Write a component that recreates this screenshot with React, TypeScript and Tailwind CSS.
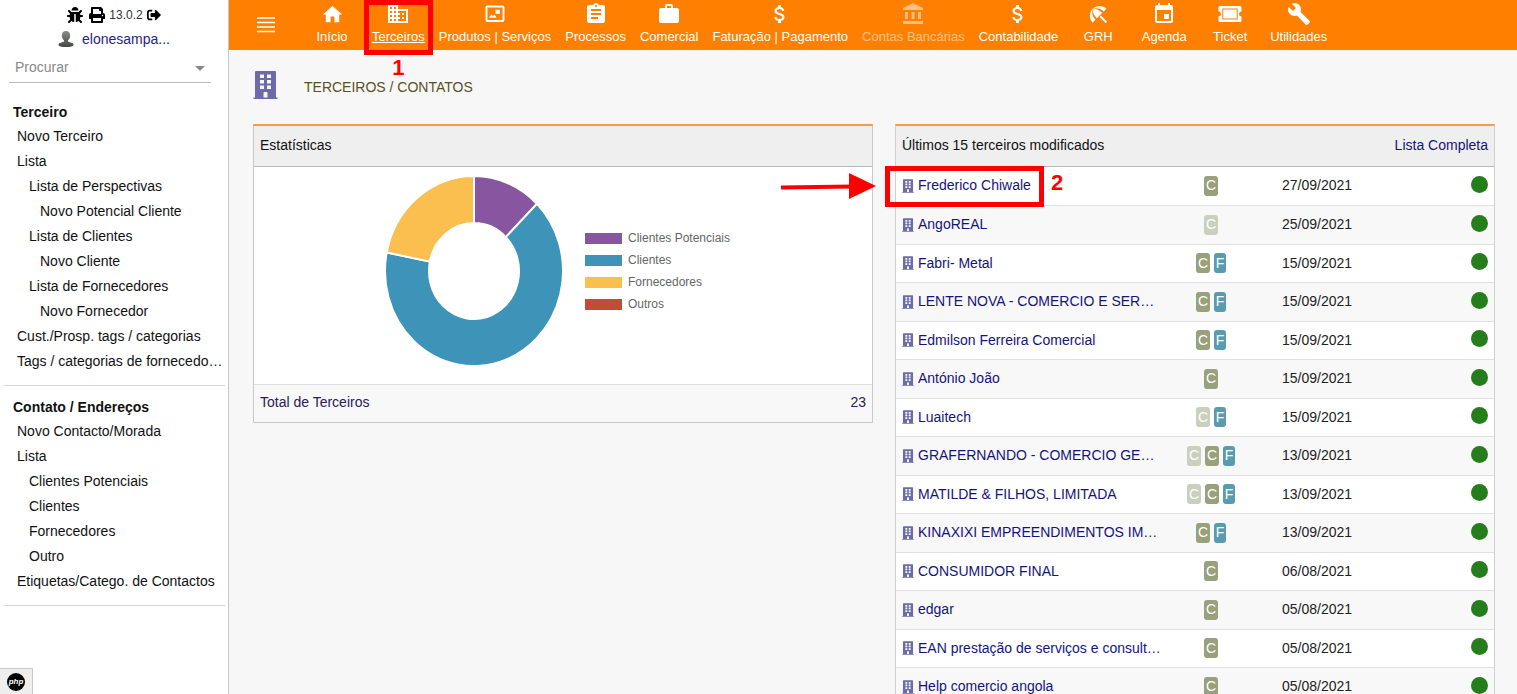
import type { ReactNode } from "react";
import {
  MdAccountBalance,
  MdAssignment,
  MdAttachMoney,
  MdBeachAccess,
  MdBuild,
  MdBusiness,
  MdEvent,
  MdHome,
  MdWork,
} from "react-icons/md";
import { FaBug, FaPrint, FaSignOutAlt } from "react-icons/fa";

function BuildingIcon({ className }: { className: string }) {
  return (
    <svg viewBox="0 0 25 28" className={`shrink-0 text-[#6c6aa8] ${className}`} aria-hidden="true">
      <path
        fillRule="evenodd"
        fill="currentColor"
        d="M3 0h19a1 1 0 0 1 1 1v25.500h1.500V28H.5v-1.500H2V1a1 1 0 0 1 1-1zM7 3.500v3.500h4v-3.500zM14 3.500v3.500h4v-3.500zM7 9v3.500h4V9zM14 9v3.500h4V9zM7 14.500V18h4v-3.500zM14 14.500V18h4v-3.500zM10.500 22v4.500h4V22a1 1 0 0 0-1-1h-2a1 1 0 0 0-1 1z"
      />
    </svg>
  );
}

function ProductsIcon() {
  return (
    <svg viewBox="0 0 20 18" className="h-[18px] w-5" fill="none" aria-hidden="true">
      <rect x="1.5" y="1.5" width="17" height="14.5" rx="1" stroke="currentColor" strokeWidth="1.9" />
      <path d="M4 12.800l2.300-3.600 1.700 2 1.500-1.700 2 3.300z" fill="currentColor" />
      <rect x="10.500" y="4.800" width="4.500" height="4" fill="currentColor" />
    </svg>
  );
}

function TicketIcon() {
  return (
    <svg viewBox="0 0 24 18" className="h-[18px] w-6" aria-hidden="true">
      <path
        fillRule="evenodd"
        fill="currentColor"
        d="M2 1h20a1.5 1.5 0 0 1 1.5 1.5v4a2.500 2.500 0 0 0 0 5v4A1.500 1.500 0 0 1 22 17H2a1.500 1.500 0 0 1-1.500-1.500v-4a2.500 2.500 0 0 0 0-5v-4A1.500 1.500 0 0 1 2 1zM4.300 3.500v11h15.400v-11zM5.300 4.500h13.400v9H5.300z"
      />
    </svg>
  );
}

function UserIcon() {
  return (
    <svg viewBox="0 0 16 18" className="h-[18px] w-4" aria-hidden="true">
      <defs>
        <linearGradient id="user" x1="0" y1="0" x2="0" y2="1">
          <stop offset="0" stopColor="#8a8c88" />
          <stop offset="1" stopColor="#454743" />
        </linearGradient>
      </defs>
      <path
        fill="url(#user)"
        d="M8 1c2.600 0 4.200 1.900 4.200 4.500 0 2-.9 3.800-2.200 4.800v1.200l4 1.400c1 .4 1.500 1 1.500 2 0 1.300-3.500 2.100-7.500 2.100S.5 16.200.5 14.900c0-1 .5-1.600 1.500-2l4-1.400v-1.200C4.700 9.300 3.800 7.500 3.800 5.500 3.800 2.900 5.400 1 8 1z"
      />
    </svg>
  );
}

type NavItem = { label: string; icon: ReactNode; active?: boolean; disabled?: boolean };

const navItems: NavItem[] = [
  { label: "Início", icon: <MdHome size={23} /> },
  { label: "Terceiros", icon: <MdBusiness size={24} />, active: true },
  { label: "Produtos | Serviços", icon: <ProductsIcon /> },
  { label: "Processos", icon: <MdAssignment size={24} /> },
  { label: "Comercial", icon: <MdWork size={24} /> },
  { label: "Faturação | Pagamento", icon: <MdAttachMoney size={24} /> },
  { label: "Contas Bancárias", icon: <MdAccountBalance size={24} />, disabled: true },
  { label: "Contabilidade", icon: <MdAttachMoney size={24} /> },
  { label: "GRH", icon: <MdBeachAccess size={23} /> },
  { label: "Agenda", icon: <MdEvent size={24} /> },
  { label: "Ticket", icon: <TicketIcon /> },
  { label: "Utilidades", icon: <MdBuild size={24} /> },
];

type MenuEntry = { label: string; level: 0 | 1 | 2 };

const menus: { title: string; entries: MenuEntry[] }[] = [
  {
    title: "Terceiro",
    entries: [
      { label: "Novo Terceiro", level: 0 },
      { label: "Lista", level: 0 },
      { label: "Lista de Perspectivas", level: 1 },
      { label: "Novo Potencial Cliente", level: 2 },
      { label: "Lista de Clientes", level: 1 },
      { label: "Novo Cliente", level: 2 },
      { label: "Lista de Fornecedores", level: 1 },
      { label: "Novo Fornecedor", level: 2 },
      { label: "Cust./Prosp. tags / categorias", level: 0 },
      { label: "Tags / categorias de fornecedo…", level: 0 },
    ],
  },
  {
    title: "Contato / Endereços",
    entries: [
      { label: "Novo Contacto/Morada", level: 0 },
      { label: "Lista", level: 0 },
      { label: "Clientes Potenciais", level: 1 },
      { label: "Clientes", level: 1 },
      { label: "Fornecedores", level: 1 },
      { label: "Outro", level: 1 },
      { label: "Etiquetas/Catego. de Contactos", level: 0 },
    ],
  },
];

const indent = { 0: "pl-[13px]", 1: "pl-[25px]", 2: "pl-[36px]" };

type Tag = "p" | "c" | "f";
type Party = { name: string; tags: Tag[]; date: string };

const parties: Party[] = [
  { name: "Frederico Chiwale", tags: ["c"], date: "27/09/2021" },
  { name: "AngoREAL", tags: ["p"], date: "25/09/2021" },
  { name: "Fabri- Metal", tags: ["c", "f"], date: "15/09/2021" },
  { name: "LENTE NOVA - COMERCIO E SER…", tags: ["c", "f"], date: "15/09/2021" },
  { name: "Edmilson Ferreira Comercial", tags: ["c", "f"], date: "15/09/2021" },
  { name: "António João", tags: ["c"], date: "15/09/2021" },
  { name: "Luaitech", tags: ["p", "f"], date: "15/09/2021" },
  { name: "GRAFERNANDO - COMERCIO GE…", tags: ["p", "c", "f"], date: "13/09/2021" },
  { name: "MATILDE & FILHOS, LIMITADA", tags: ["p", "c", "f"], date: "13/09/2021" },
  { name: "KINAXIXI EMPREENDIMENTOS IM…", tags: ["c", "f"], date: "13/09/2021" },
  { name: "CONSUMIDOR FINAL", tags: ["c"], date: "06/08/2021" },
  { name: "edgar", tags: ["c"], date: "05/08/2021" },
  { name: "EAN prestação de serviços e consult…", tags: ["c"], date: "05/08/2021" },
  { name: "Help comercio angola", tags: ["c"], date: "05/08/2021" },
];

const tagStyle: Record<Tag, { letter: string; className: string }> = {
  p: { letter: "C", className: "w-[14px] bg-[#cbcfbd]" },
  c: { letter: "C", className: "w-[14px] bg-[#99a17c]" },
  f: { letter: "F", className: "w-[12px] bg-[#599caf]" },
};

const slices = [
  { label: "Clientes Potenciais", value: 4, color: "#8856a0" },
  { label: "Clientes", value: 21, color: "#3d93b8" },
  { label: "Fornecedores", value: 7, color: "#fbbf50" },
  { label: "Outros", value: 0, color: "#bf4d38" },
];

function Donut() {
  const total = slices.reduce((sum, s) => sum + s.value, 0);
  const outer = { x: 89, y: 95 };
  const inner = { x: 45, y: 48 };
  const at = (r: { x: number; y: number }, t: number) => {
    const a = t * 2 * Math.PI;
    return `${(90 + r.x * Math.sin(a)).toFixed(2)} ${(96 - r.y * Math.cos(a)).toFixed(2)}`;
  };
  let start = 0;
  return (
    <svg viewBox="0 0 180 192" className="h-[192px] w-[180px]" role="img" aria-label="Estatísticas">
      {slices
        .filter((s) => s.value > 0)
        .map((s) => {
          const from = start;
          const to = from + s.value / total;
          start = to;
          const large = to - from > 0.5 ? 1 : 0;
          return (
            <path
              key={s.label}
              fill={s.color}
              stroke="#fff"
              strokeWidth="2"
              d={`M${at(outer, from)}A${outer.x} ${outer.y} 0 ${large} 1 ${at(outer, to)}L${at(inner, to)}A${inner.x} ${inner.y} 0 ${large} 0 ${at(inner, from)}Z`}
            />
          );
        })}
    </svg>
  );
}

function Sidebar() {
  return (
    <aside className="relative w-[229px] shrink-0 border-r border-[#c8c8c8] bg-white">
      <div className="flex h-[30px] items-center justify-center gap-1 text-black">
        <button type="button" aria-label="Bug">
          <FaBug size={16} />
        </button>
        <button type="button" aria-label="Imprimir" className="ml-0.5">
          <FaPrint size={16} />
        </button>
        <span className="text-[12px] text-[#333]">13.0.2</span>
        <button type="button" aria-label="Sair">
          <FaSignOutAlt size={14} />
        </button>
      </div>
      <a href="#user" className="flex h-[18px] items-center justify-center gap-2 text-[14px] text-[#25258a]">
        <UserIcon />
        elonesampa...
      </a>
      <div className="relative ml-[9px] mt-[5px] w-[202px] border-b border-[#bbb]">
        <select
          aria-label="Procurar"
          className="h-[29px] w-full appearance-none bg-transparent pl-1.5 text-[14px] text-[#888] outline-none"
        >
          <option>Procurar</option>
        </select>
        <svg viewBox="0 0 10 5" className="pointer-events-none absolute right-[6px] top-[13px] h-[5px] w-[10px]">
          <path d="M0 0h10L5 5z" fill="#888" />
        </svg>
      </div>
      <nav className="pl-1 pr-[3px] pt-[8px] text-[14px] text-[#111]">
        {menus.map((menu) => (
          <section key={menu.title} className="border-b border-[#d4d4d4] pb-[11px] pt-[9px]">
            <h2 className="pl-[9px] font-bold leading-6">{menu.title}</h2>
            <ul>
              {menu.entries.map((entry) => (
                <li key={entry.label} className={`whitespace-nowrap leading-[25px] ${indent[entry.level]}`}>
                  <a href="#menu">{entry.label}</a>
                </li>
              ))}
            </ul>
          </section>
        ))}
      </nav>
      <div className="absolute bottom-0 left-0 flex h-[26px] w-[33px] items-center justify-center border-r border-t border-[#ccc] bg-[#eee]">
        <span className="flex size-[18px] items-center justify-center rounded-full bg-black text-[8px] font-bold italic leading-none text-white">
          php
        </span>
      </div>
    </aside>
  );
}

function TopBar() {
  return (
    <header className="flex h-[50px] shrink-0 bg-[#ff8000] pl-1 text-white">
      <button type="button" aria-label="Menu" className="flex w-[66px] items-center justify-center">
        <svg viewBox="0 0 18 16" className="h-4 w-[18px]" stroke="currentColor" strokeWidth="1.6">
          <path d="M0 1h18M0 5.500h18M0 10h18M0 14.500h18" />
        </svg>
      </button>
      <nav className="flex">
        {navItems.map((item) => (
          <a
            key={item.label}
            href="#nav"
            className={`relative flex min-w-[66px] flex-col items-center whitespace-nowrap px-[7px] pt-[2px] text-[13px] ${
              item.disabled ? "opacity-50" : ""
            }`}
          >
            <span className="flex h-6 items-center">{item.icon}</span>
            <span className={`leading-[21px] ${item.active ? "underline" : ""}`}>{item.label}</span>
            {item.active && (
              <>
                <span className="absolute inset-x-[-1px] top-0 h-[55px] border-[5px] border-[#fe0000]" />
                <span className="absolute left-1/2 top-[56px] z-10 -translate-x-1/2 text-[22px] font-bold leading-6 text-[#fe0000]">
                  1
                </span>
              </>
            )}
          </a>
        ))}
      </nav>
    </header>
  );
}

function StatsPanel() {
  return (
    <section className="border border-t-2 border-[#c8c8c8] border-t-[#ff9a3c] bg-white">
      <h2 className="flex h-[41px] items-center border-b border-[#b8b8b8] bg-[#efefef] px-1.5 pb-0.5 text-[14px]">
        Estatísticas
      </h2>
      <div className="flex h-[217px] items-center justify-center gap-[21px] pb-[9px] pr-[12px]">
        <Donut />
        <ul className="text-[12px] leading-[22px] text-[#666]">
          {slices.map((s) => (
            <li key={s.label} className="flex items-center gap-1.5">
              <span className="h-[11px] w-[37px]" style={{ backgroundColor: s.color }} />
              {s.label}
            </li>
          ))}
        </ul>
      </div>
      <a
        href="#total"
        className="flex h-[38px] items-center justify-between border-t border-[#ddd] bg-[#f8f8f8] px-1.5 pb-0.5 text-[14px] text-[#2a2055]"
      >
        <span>Total de Terceiros</span>
        <span>23</span>
      </a>
    </section>
  );
}

function Callout() {
  return (
    <>
      <span className="absolute -left-[17px] -top-[9px] h-[41px] w-[159px] border-[5px] border-[#fe0000]" />
      <span className="absolute left-[149px] -top-[4px] text-[22px] font-bold leading-6 text-[#fe0000]">2</span>
      <svg viewBox="0 0 96 28" className="absolute -left-[121px] -top-[3px] h-7 w-24" aria-hidden="true">
        <path d="M0 15.500L72 14.500" stroke="#fe0000" strokeWidth="4" />
        <path d="M68 1l27 13-27 13z" fill="#fe0000" />
      </svg>
    </>
  );
}

function PartiesPanel() {
  return (
    <section className="border border-t-2 border-[#d0d0d0] border-t-[#ff9a3c] bg-white">
      <div className="flex h-[41px] items-center justify-between border-b border-[#b8b8b8] bg-[#efefef] px-1.5 pb-0.5 text-[14px]">
        <h2>Últimos 15 terceiros modificados</h2>
        <a href="#list" className="text-[#14147c]">
          Lista Completa
        </a>
      </div>
      <table className="w-full table-fixed text-[14px]">
        <colgroup>
          <col />
          <col className="w-[68px]" />
          <col className="w-[144px]" />
          <col className="w-[105px]" />
        </colgroup>
        <tbody>
          {parties.map((party, i) => (
            <tr key={party.name} className="border-b border-[#e0e0e0] odd:h-[38px] even:h-[39px] even:bg-[#f8f8f8]">
              <td className="pl-1.5">
                <a href="#party" className="relative flex items-center gap-1 whitespace-nowrap text-[#14147c]">
                  <BuildingIcon className="h-[14px] w-3" />
                  {party.name}
                  {i === 0 && <Callout />}
                </a>
              </td>
              <td>
                <div className="flex justify-center gap-1">
                  {party.tags.map((tag) => (
                    <span
                      key={tag}
                      className={`flex h-5 items-center justify-center rounded-[3px] text-[14px] text-white ${tagStyle[tag].className}`}
                    >
                      {tagStyle[tag].letter}
                    </span>
                  ))}
                </div>
              </td>
              <td className="text-center text-[#222]">{party.date}</td>
              <td className="pb-[3px] pr-1.5">
                <span className="ml-auto block size-[17px] rounded-full bg-[#267d1c]" />
              </td>
            </tr>
          ))}
        </tbody>
      </table>
    </section>
  );
}

export default function App() {
  return (
    <div className="flex h-screen overflow-hidden bg-[#f7f7f7] font-['Liberation_Sans',Arial,sans-serif] text-[#111]">
      <Sidebar />
      <div className="flex min-w-0 flex-1 flex-col">
        <TopBar />
        <main className="px-6 pr-[22px]">
          <div className="mb-1 flex h-[70px] items-center gap-[26px]">
            <BuildingIcon className="h-7 w-[25px]" />
            <h1 className="pt-1 text-[14px] text-[#5a5024]">TERCEIROS / CONTATOS</h1>
          </div>
          <div className="grid grid-cols-[31fr_30fr] items-start gap-[22px]">
            <StatsPanel />
            <PartiesPanel />
          </div>
        </main>
      </div>
    </div>
  );
}
